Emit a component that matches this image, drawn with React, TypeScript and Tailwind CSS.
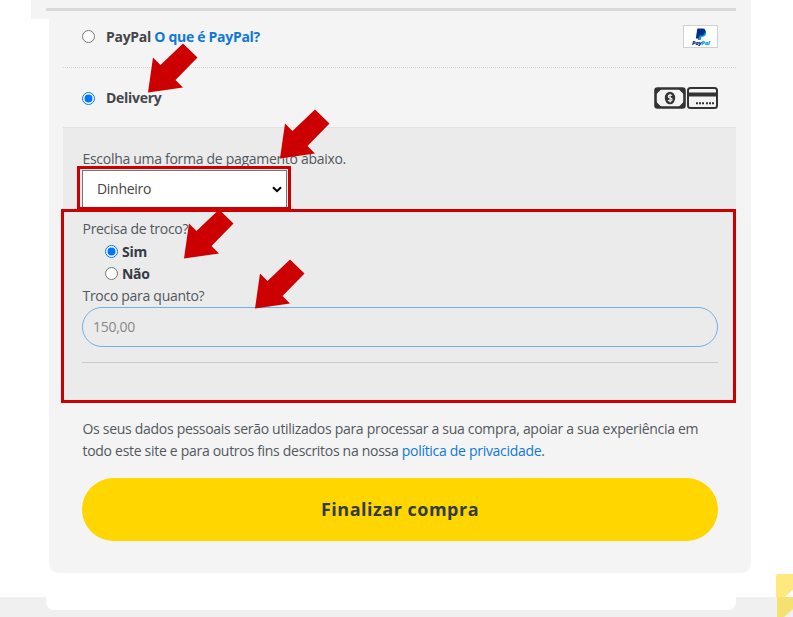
import React from "react";

function Radio({ checked }: { checked?: boolean }) {
  return (
    <svg className="block h-[13px] w-[13px] shrink-0" viewBox="0 0 13 13">
      <circle cx="6.5" cy="6.5" r="6" fill="#fff" stroke={checked ? "#0075ff" : "#767676"} />
      {checked && <circle cx="6.5" cy="6.5" r="4" fill="#0075ff" />}
    </svg>
  );
}

function Arrow({ place }: { place: string }) {
  return (
    <svg className={`absolute h-[50px] w-[50px] ${place}`} viewBox="0 0 50 50">
      <path d="M0 49.5 5 14.5 12.5 22 35 .5 49.5 14.5 27.5 37 35 44.5Z" fill="#c00" />
    </svg>
  );
}

function PayPalBadge() {
  return (
    <svg className="block h-[23px] w-[35px]" viewBox="0 0 35 23">
      <rect x=".5" y=".5" width="34" height="22" fill="#fff" stroke="#d0d0d0" />
      <path d="M15.5 5h5.200c2.200 0 2.900 1.700 2.300 3.700-.7 2.400-2.300 3.100-4.500 3.100l-.8 3.200h-2.700Z" fill="#009cde" />
      <path d="M14.300 3.500h5.400c2.300 0 3 1.500 2.500 3.500-.6 2.500-2.200 3.600-4.500 3.600h-1.200l-.7 3h-3Z" fill="#013088" />
      <text x="9" y="19.500" fontFamily="Open Sans, sans-serif" fontSize="5.500" fontWeight="800" fontStyle="italic" textLength="17.500" lengthAdjust="spacingAndGlyphs">
        <tspan fill="#013088">Pay</tspan>
        <tspan fill="#009cde">Pal</tspan>
      </text>
    </svg>
  );
}

function MoneyIcon() {
  return (
    <svg className="block h-[22px] w-[32px]" viewBox="0 0 32 22">
      <rect x="1.500" y="1.500" width="29" height="19" rx="2" fill="#f4f4f4" stroke="#333" strokeWidth="2.600" />
      <path d="M2 2h5.500L2 7.500ZM30 2h-5.500L30 7.500ZM2 20h5.500L2 14.500ZM30 20h-5.500L30 14.500Z" fill="#333" />
      <ellipse cx="16" cy="11" rx="5.200" ry="6.300" fill="#333" />
      <path d="M18 8.700c-.8-1-3.700-1-3.700.7s3.800 1.300 3.800 3.200-3.200 1.900-4.200.6M16.100 6.700v8.700" fill="none" stroke="#f4f4f4" strokeWidth="1.200" />
    </svg>
  );
}

function CardIcon() {
  return (
    <svg className="block h-[22px] w-[31px]" viewBox="0 0 31 22">
      <rect x="1" y="1" width="29" height="20" rx="2.500" fill="#f4f4f4" stroke="#333" strokeWidth="2" />
      <path d="M1 5.500h29v4H1Z" fill="#333" />
      <path d="M9 16.200h8M19 16.200h8" stroke="#333" strokeWidth="2" strokeDasharray="2 1" />
    </svg>
  );
}

export default function App() {
  return (
    <div className="relative flex h-[617px] w-[793px] flex-col overflow-hidden bg-white font-['Open_Sans',sans-serif] text-sm leading-[22px] tracking-[-0.295px] text-[#515860]">
      <div className="ml-[31px] h-[19px] w-[720px] bg-[#f4f4f4] pt-2 pl-[15px]">
        <div className="h-[3px] w-[690px] bg-[#dadada]" />
      </div>

      <main className="ml-[49px] h-[554px] w-[702px] rounded-b-[9px] bg-[#f4f4f4] pr-[15px] pl-[14px]">
        <div className="flex h-[49px] items-center border-b border-dotted border-[#d6d6d6] pr-[18px] pb-[14px] pl-[19px] font-bold text-[#43454b]">
          <Radio />
          <span className="ml-[11px] pt-[2px]">
            PayPal <a className="text-[#0f78d7]">O que é PayPal?</a>
          </span>
          <span className="ml-auto"><PayPalBadge /></span>
        </div>
        <div className="flex h-[59px] items-center pt-px pr-[18px] pl-[19px] font-bold text-[#43454b]">
          <Radio checked />
          <span className="ml-[11px]">Delivery</span>
          <span className="ml-auto flex gap-[1px]"><MoneyIcon /><CardIcon /></span>
        </div>

        <section className="h-[276px] border-t border-[#e2e2e2] bg-[#ebebeb] pr-[18px] pl-[19px] pt-[20px]">
          <p className="h-[22px] pl-[0.5px]">Escolha uma forma de pagamento abaixo.</p>
          <div className="flex h-[38px] w-[205px] items-center justify-between border border-[#767676] bg-white pr-[4px] pl-[14px] text-[#444]">
            <span>Dinheiro</span>
            <svg className="h-[7px] w-[10px]" viewBox="0 0 10 7">
              <path d="m1 1.200 4 4 4-4" fill="none" stroke="#000" strokeWidth="2" />
            </svg>
          </div>
          <p className="mt-[10px] pl-[0.5px]">Precisa de troco?</p>
          <div className="flex h-[22px] items-center gap-[4px] pl-[23px] font-bold text-[#333b44]">
            <Radio checked /><span className="pt-[2px]">Sim</span>
          </div>
          <div className="flex h-[22px] items-center gap-[4px] pl-[23px] font-bold text-[#333b44]">
            <Radio /><span className="pt-[2px]">Não</span>
          </div>
          <p className="pt-px pl-[0.5px]">Troco para quanto?</p>
          <div className="flex h-[40px] items-center rounded-full border border-[#6fb1e8] pl-[10px] text-[#888]">150,00</div>
          <hr className="mt-[15px] border-[#ccc]" />
        </section>

        <p className="mt-[15px] ml-[19px] w-[636px] pl-[0.5px] whitespace-nowrap">
          Os seus dados pessoais serão utilizados para processar a sua compra, apoiar a sua experiência em
          <br />
          todo este site e para outros fins descritos na nossa <a className="text-[#0f78d7]">política de privacidade</a>.
        </p>
        <button className="mt-[16px] ml-[19px] block h-[63px] w-[636px] rounded-full bg-[#ffd600] pb-[2px] text-lg font-bold tracking-[0.5px] text-[#333b44]">
          Finalizar compra
        </button>
      </main>

      <div className="h-6" />
      <footer className="h-5 bg-[#f0f0f0]">
        <div className="ml-[46px] h-[13px] w-[690px] rounded-b-[8px] bg-white" />
      </footer>

      <div className="absolute top-[166px] left-[77px] h-[44px] w-[214px] border-3 border-[#c00]" />
      <div className="absolute top-[209px] left-[61px] h-[194px] w-[675px] border-3 border-[#c00]" />
      <Arrow place="left-[148px] top-[43px]" />
      <Arrow place="left-[280px] top-[109px]" />
      <Arrow place="left-[184px] top-[209px]" />
      <Arrow place="left-[255px] top-[259px]" />
      <svg className="absolute top-[574px] left-[776px] h-[43px] w-[17px]" viewBox="0 0 17 43">
        <path d="M2 0h15v16l-8 7H0V2Q0 0 2 0Z" fill="#ffe97f" />
        <path d="M9 23l8-7v7Z" fill="#fff" />
        <path d="M1 23h16v12l-9 8H1Z" fill="#f6e06f" />
      </svg>
    </div>
  );
}
